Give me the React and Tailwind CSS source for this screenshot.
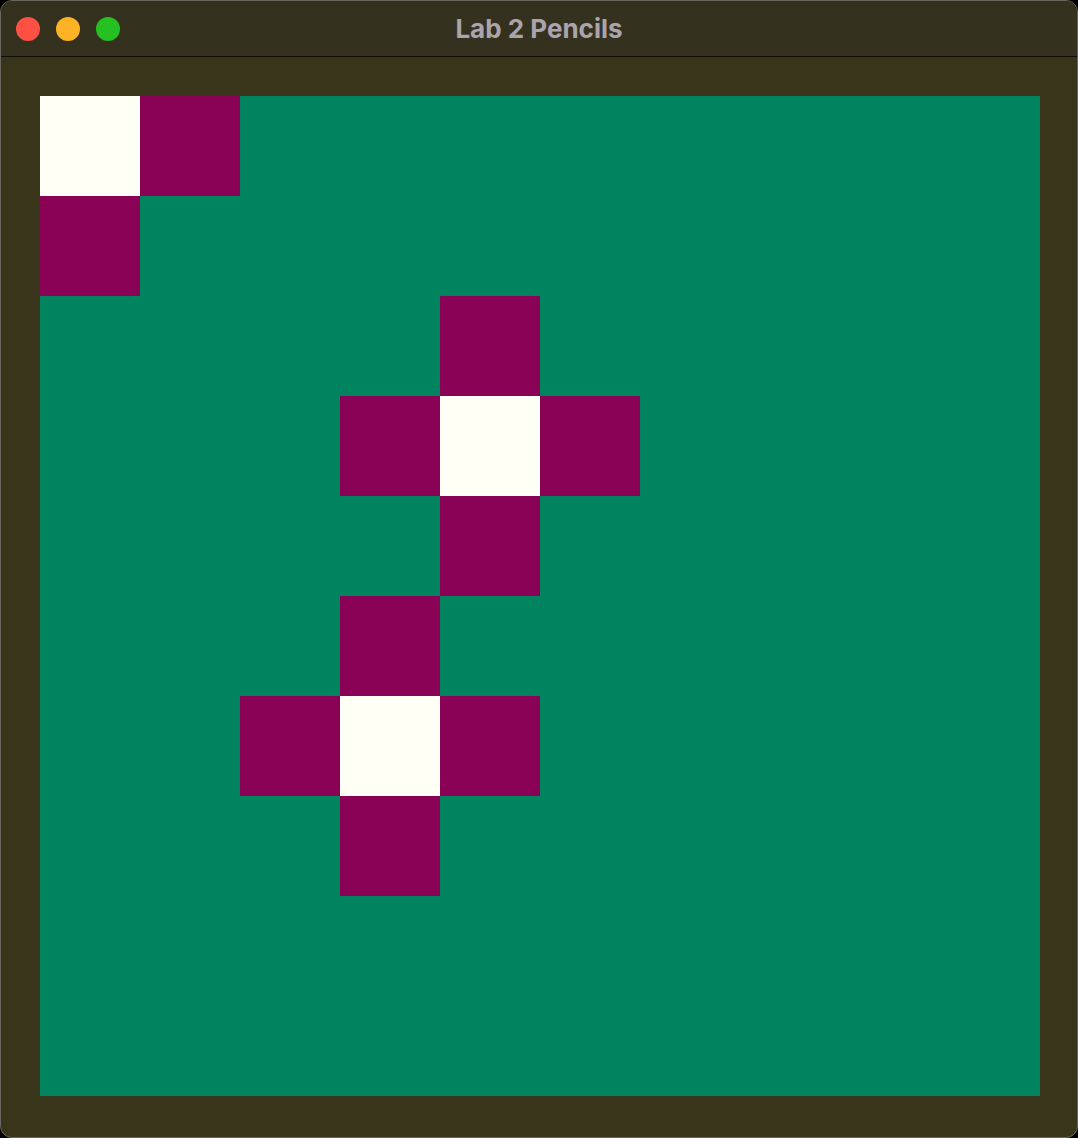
import React from 'react'

const WHITE = new Set(['0,0', '4,3', '3,6'])
const PINK = new Set(['1,0', '0,1', '4,2', '3,3', '5,3', '4,4', '3,5', '2,6', '4,6', '3,7'])

const cellClass = (x, y) => {
  const k = `${x},${y}`
  if (WHITE.has(k)) return 'bg-[#fffff6]'
  if (PINK.has(k)) return 'bg-[#8a0255]'
  return 'bg-[#00835f]'
}

export default function App() {
  const cells = []
  for (let y = 0; y < 10; y++) {
    for (let x = 0; x < 10; x++) {
      cells.push(<div key={`${x}-${y}`} className={cellClass(x, y)} />)
    }
  }

  return (
    <div className="w-[1078px] h-[1138px] bg-black">
      <div className="w-full h-full rounded-[12px] border border-[#6a6660] overflow-hidden flex flex-col bg-[#38351a]">
        {/* Title bar */}
        <div className="relative h-[56px] shrink-0 bg-[#35311f] border-b border-[#0e0d0a] flex items-center">
          <div className="flex items-center gap-[16px] pl-[15px]">
            <span className="w-[24px] h-[24px] rounded-full bg-[#fe5143]" />
            <span className="w-[24px] h-[24px] rounded-full bg-[#fdb325]" />
            <span className="w-[24px] h-[24px] rounded-full bg-[#25c122]" />
          </div>
          <div className="absolute inset-0 flex items-center justify-center pointer-events-none">
            <span className="text-[#aca4ac] text-[26px] font-bold font-['Inter','Liberation_Sans',sans-serif]">
              Lab 2 Pencils
            </span>
          </div>
        </div>

        {/* Canvas */}
        <div className="flex-1 pt-[39px] pl-[39px]">
          <div className="w-[1000px] h-[1000px] grid grid-cols-10 grid-rows-10">
            {cells}
          </div>
        </div>
      </div>
    </div>
  )
}
